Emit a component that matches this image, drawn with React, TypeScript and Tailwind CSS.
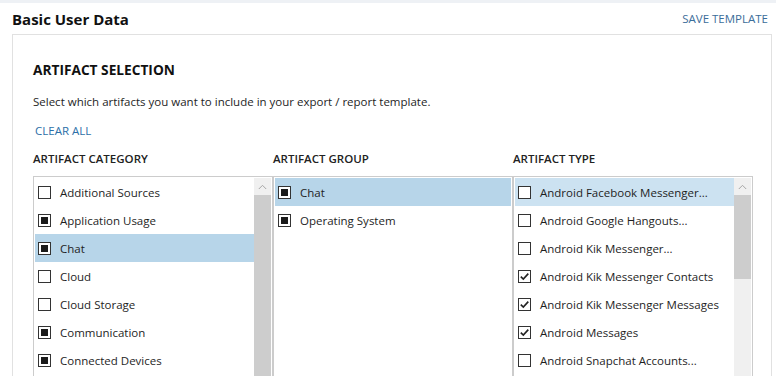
import React from "react";

type State = "none" | "partial" | "checked";

function Box({ state }: { state: State }) {
  return (
    <span className="relative flex h-[13px] w-[13px] shrink-0 items-center justify-center border border-[#333333] bg-white">
      {state === "partial" && <span className="block h-[7px] w-[7px] bg-[#1a1a1a]" />}
      {state === "checked" && (
        <svg width="11" height="11" viewBox="0 0 11 11" className="block">
          <path d="M1.8 5.6 L4.3 8.1 L9.3 2.6" fill="none" stroke="#222" strokeWidth="1.6" />
        </svg>
      )}
    </span>
  );
}

type Row = { label: string; state: State; sel?: "strong" | "light" };

function Scrollbar({ thumb }: { thumb: number }) {
  return (
    <div className="flex w-[17px] shrink-0 flex-col">
      <div className="flex h-[17px] items-center justify-center bg-[#f0f0f0]">
        <svg width="9" height="6" viewBox="0 0 9 6">
          <path d="M0.8 5 L4.5 1.3 L8.2 5" fill="none" stroke="#a6a6a6" strokeWidth="1" />
        </svg>
      </div>
      <div className="bg-[#cdcdcd]" style={{ height: thumb }} />
      <div className="flex-1 bg-[#f0f0f0]" />
    </div>
  );
}

function List({ rows, thumb }: { rows: Row[]; thumb?: number }) {
  return (
    <div className="flex h-[230px] w-[240px] shrink-0 border border-[#cccccc] p-px">
      <div className="flex min-w-0 flex-1 flex-col">
        {rows.map((r) => (
          <div
            key={r.label}
            className={
              "flex h-[28px] shrink-0 items-center gap-[9px] pl-[3px] text-[11.5px] text-[#1e1e1e] " +
              (r.sel === "strong" ? "bg-[#b7d5e9]" : r.sel === "light" ? "bg-[#cce2f1]" : "")
            }
          >
            <Box state={r.state} />
            <span className="whitespace-nowrap pt-[2px]">{r.label}</span>
          </div>
        ))}
      </div>
      {thumb !== undefined && <Scrollbar thumb={thumb} />}
    </div>
  );
}

const categories: Row[] = [
  { label: "Additional Sources", state: "none" },
  { label: "Application Usage", state: "partial" },
  { label: "Chat", state: "partial", sel: "strong" },
  { label: "Cloud", state: "none" },
  { label: "Cloud Storage", state: "none" },
  { label: "Communication", state: "partial" },
  { label: "Connected Devices", state: "partial" },
];

const groups: Row[] = [
  { label: "Chat", state: "partial", sel: "strong" },
  { label: "Operating System", state: "partial" },
];

const types: Row[] = [
  { label: "Android Facebook Messenger...", state: "none", sel: "light" },
  { label: "Android Google Hangouts...", state: "none" },
  { label: "Android Kik Messenger...", state: "none" },
  { label: "Android Kik Messenger Contacts", state: "checked" },
  { label: "Android Kik Messenger Messages", state: "checked" },
  { label: "Android Messages", state: "checked" },
  { label: "Android Snapchat Accounts...", state: "none" },
];

export default function App() {
  return (
    <div
      className="h-[376px] w-[776px] overflow-hidden bg-white text-[#1e1e1e]"
      style={{ fontFamily: '"Open Sans", "Noto Sans", sans-serif' }}
    >
      <div className="h-[3px] bg-[#eef1f5]" />
      <div className="flex h-[31px] items-center justify-between pl-[12px] pr-[8px]">
        <h1 className="text-[15px] font-bold leading-[20px] text-[#111]">Basic User Data</h1>
        <button className="text-[11.5px] leading-[16px] text-[#3b6d9a]">SAVE TEMPLATE</button>
      </div>
      <div className="ml-[12px] w-[760px] border border-[#e1e1e1] pl-[20px] pr-[18px] pt-[25px]">
        <h2 className="text-[13.7px] font-bold leading-[20px] text-[#111]">ARTIFACT SELECTION</h2>
        <p className="mt-[14px] text-[11.5px] leading-[16px]">
          Select which artifacts you want to include in your export / report template.
        </p>
        <button className="mt-[13px] ml-[2px] block text-[11.5px] leading-[16px] text-[#2c6fa8]">CLEAR ALL</button>
        <div className="mt-[12px] flex">
          {["ARTIFACT CATEGORY", "ARTIFACT GROUP", "ARTIFACT TYPE"].map((h) => (
            <div key={h} className="w-[240px] shrink-0 text-[11.5px] font-semibold leading-[16px] text-[#222]">
              {h}
            </div>
          ))}
        </div>
        <div className="mt-[9px] flex pb-[20px]">
          <List rows={categories} thumb={200} />
          <List rows={groups} />
          <List rows={types} thumb={84} />
        </div>
      </div>
    </div>
  );
}
